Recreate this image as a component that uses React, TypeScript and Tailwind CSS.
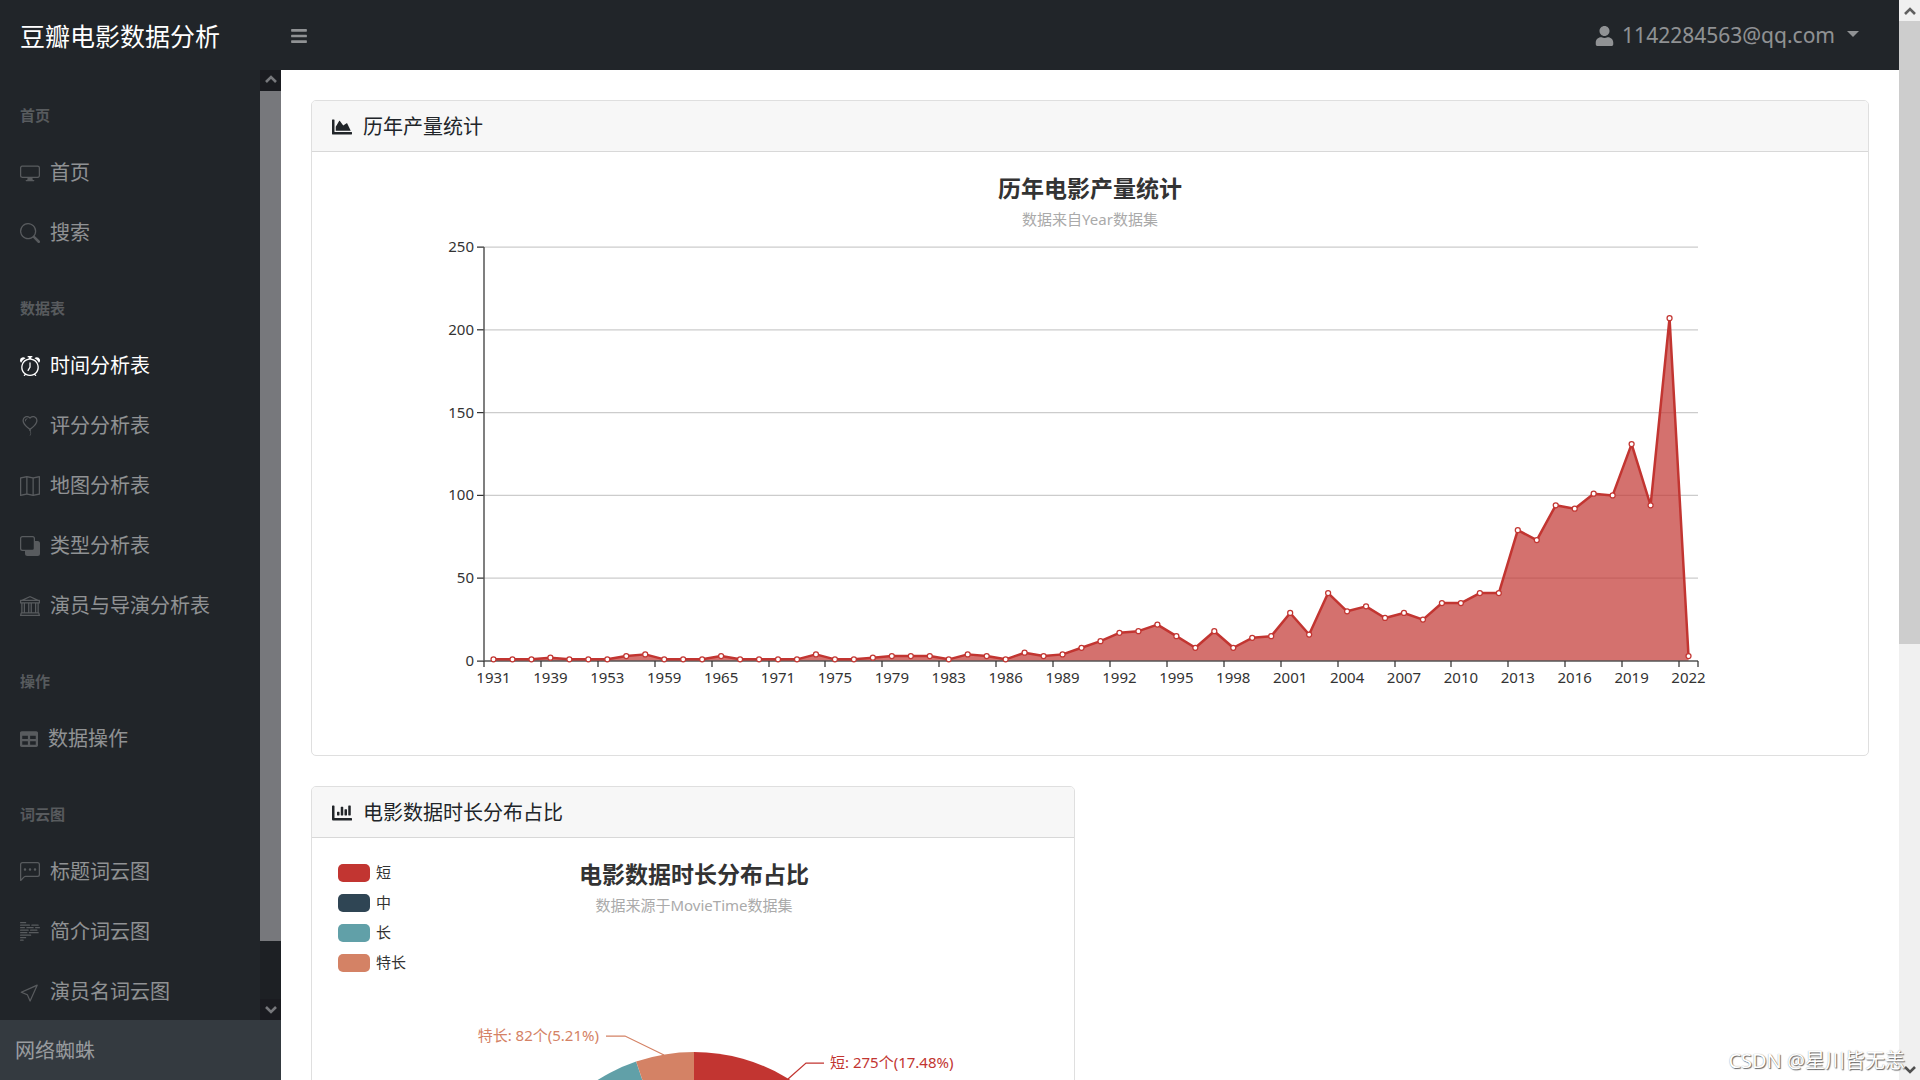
import type { ComponentType, ReactNode } from "react";
import {
  BsAlarm,
  BsBalloonHeart,
  BsBank,
  BsBodyText,
  BsChatLeftDots,
  BsCursor,
  BsDisplay,
  BsMap,
  BsSearch,
  BsSubtract,
} from "react-icons/bs";
import { FaBars, FaChartArea, FaChartBar, FaTable, FaUser } from "react-icons/fa";

type Icon = ComponentType<{ className?: string }>;

interface NavItem {
  label: string;
  icon: Icon;
  active?: boolean;
  narrow?: boolean;
}

const NAV: { heading: string; items: NavItem[] }[] = [
  {
    heading: "首页",
    items: [
      { label: "首页", icon: BsDisplay },
      { label: "搜索", icon: BsSearch },
    ],
  },
  {
    heading: "数据表",
    items: [
      { label: "时间分析表", icon: BsAlarm, active: true },
      { label: "评分分析表", icon: BsBalloonHeart },
      { label: "地图分析表", icon: BsMap },
      { label: "类型分析表", icon: BsSubtract },
      { label: "演员与导演分析表", icon: BsBank },
    ],
  },
  { heading: "操作", items: [{ label: "数据操作", icon: FaTable, narrow: true }] },
  {
    heading: "词云图",
    items: [
      { label: "标题词云图", icon: BsChatLeftDots },
      { label: "简介词云图", icon: BsBodyText },
      { label: "演员名词云图", icon: BsCursor },
    ],
  },
];

const OUTPUT = [
  1, 1, 1, 2, 1, 1, 1, 3, 4, 1, 1, 1, 3, 1, 1, 1, 1, 4, 1, 1, 2, 3, 3, 3, 1, 4, 3, 1, 5, 3, 4, 8, 12,
  17, 18, 22, 15, 8, 18, 8, 14, 15, 29, 16, 41, 30, 33, 26, 29, 25, 35, 35, 41, 41, 79, 73, 94, 92,
  101, 100, 131, 94, 207, 3,
];

const YEARS = [
  1931, 1939, 1953, 1959, 1965, 1971, 1975, 1979, 1983, 1986, 1989, 1992, 1995, 1998, 2001, 2004,
  2007, 2010, 2013, 2016, 2019, 2022,
];

function Chevron({ up = false, className }: { up?: boolean; className: string }) {
  return (
    <svg viewBox="0 0 12 8" className={`h-2 w-3 ${className}`} fill="none" stroke="currentColor" strokeWidth="2.6">
      <path d={up ? "M1 7L6 2L11 7" : "M1 1L6 6L11 1"} />
    </svg>
  );
}

function Sidebar() {
  return (
    <div className="flex w-[281px] shrink-0 flex-col bg-[#212529]">
      <div className="flex min-h-0 flex-1">
        <nav className="min-w-0 flex-1 overflow-hidden">
          {NAV.map((group) => (
            <section key={group.heading}>
              <h2 className="px-5 pt-[34px] pb-[17px] text-[15px] leading-[22px] font-bold text-white/25">
                {group.heading}
              </h2>
              {group.items.map(({ label, icon: ItemIcon, active, narrow }) => (
                <a
                  key={label}
                  href="#"
                  className={`flex h-[60px] items-center gap-2.5 px-5 text-xl whitespace-nowrap ${active ? "text-white" : "text-white/50"}`}
                >
                  <ItemIcon
                    className={`h-5 shrink-0 ${narrow ? "w-[18px]" : "w-5"} ${active ? "text-white" : "text-white/25"}`}
                  />
                  {label}
                </a>
              ))}
            </section>
          ))}
        </nav>
        <div className="flex w-[21px] shrink-0 flex-col bg-[#1d2024]">
          <div className="flex h-[21px] items-center justify-center bg-[#1a1b20] pb-1">
            <Chevron up className="text-[#77787c]" />
          </div>
          <div className="flex-1">
            <div className="h-[93.6%] bg-[#77787c]" />
          </div>
          <div className="flex h-[21px] items-center justify-center bg-[#1a1b20]">
            <Chevron className="text-[#77787c]" />
          </div>
        </div>
      </div>
      <footer className="flex h-[60px] shrink-0 items-center bg-[#343a40] px-[15px] pt-0.5 text-xl text-white/50">
        网络蜘蛛
      </footer>
    </div>
  );
}

function Card({ icon: CardIcon, title, children }: { icon: Icon; title: string; children: ReactNode }) {
  return (
    <section className="overflow-hidden rounded-[5px] border border-[#dfdfdf] bg-white">
      <h2 className="flex h-[51px] items-center gap-[11px] border-b border-[#d8d8d8] bg-[#f7f7f7] px-5 pt-0.5 text-xl text-[#212529]">
        <CardIcon className="h-5 w-5" />
        {title}
      </h2>
      {children}
    </section>
  );
}

const LEFT = 172;
const RIGHT = 1386;
const BASE = 509;
const TOP = 95;
const BAND = (RIGHT - LEFT) / OUTPUT.length;
const px = (i: number) => LEFT + BAND * (i + 0.5);
const py = (v: number) => BASE - (v * (BASE - TOP)) / 250;

function OutputChart() {
  const line = OUTPUT.map((v, i) => `${px(i)},${py(v)}`).join(" ");
  const ticks = YEARS.map((_, i) => Math.round(LEFT + BAND * i * 3)).concat(RIGHT);
  return (
    <svg viewBox="0 0 1556 603" className="block h-auto w-full" fontSize="15" fill="#333">
      <text x="778" y="45" textAnchor="middle" fontSize="23" fontWeight="700">
        历年电影产量统计
      </text>
      <text x="778" y="73" textAnchor="middle" fill="#aaa">
        数据来自Year数据集
      </text>
      {[0, 50, 100, 150, 200, 250].map((v) => (
        <g key={v}>
          {v > 0 && <path d={`M${LEFT} ${py(v)}H${RIGHT}`} stroke="#ccc" strokeWidth="1.25" />}
          <text x="162" y={py(v) + 5} textAnchor="end">
            {v}
          </text>
        </g>
      ))}
      <polygon points={`${px(0)},${BASE} ${line} ${px(63)},${BASE}`} fill="#c23531" fillOpacity="0.7" />
      {[0, 50, 100, 150, 200, 250].map((v) => (
        <path key={v} d={`M165 ${py(v)}H${LEFT}`} stroke="#333" strokeWidth="1.25" />
      ))}
      <path d={`M${LEFT} ${TOP}V${BASE}H${RIGHT}`} fill="none" stroke="#555" strokeWidth="1.5" />
      {ticks.map((x) => (
        <path key={x} d={`M${x} ${BASE}v6`} stroke="#333" strokeWidth="1.25" />
      ))}
      <polyline points={line} fill="none" stroke="#c23531" strokeWidth="2.5" strokeLinejoin="bevel" />
      {OUTPUT.map((v, i) => (
        <circle key={i} cx={px(i)} cy={py(v)} r="2.5" fill="#fff" stroke="#c23531" strokeWidth="1.25" />
      ))}
      {YEARS.map((year, i) => (
        <text key={year} x={px(i * 3)} y="531" textAnchor="middle">
          {year}
        </text>
      ))}
    </svg>
  );
}

const SLICES = [
  { label: "短", color: "#c23531", share: 0.1748 },
  { label: "中", color: "#2f4554", share: 0.5731 },
  { label: "长", color: "#61a0a8", share: 0.2 },
  { label: "特长", color: "#d48265", share: 0.0521 },
];

const CX = 382;
const CY = 394;
const R = 180;

function slicePath(from: number, to: number) {
  const at = (t: number) => `${CX + R * Math.sin(t * 2 * Math.PI)} ${CY - R * Math.cos(t * 2 * Math.PI)}`;
  return `M${CX} ${CY}L${at(from)}A${R} ${R} 0 ${to - from > 0.5 ? 1 : 0} 1 ${at(to)}Z`;
}

function DurationChart() {
  let start = 0;
  return (
    <svg viewBox="0 0 762 603" className="block h-auto w-full" fontSize="15" fill="#333">
      <text x="382" y="45" textAnchor="middle" fontSize="23" fontWeight="700">
        电影数据时长分布占比
      </text>
      <text x="382" y="73" textAnchor="middle" fill="#aaa">
        数据来源于MovieTime数据集
      </text>
      {SLICES.map((s, i) => {
        const from = start;
        start += s.share;
        return (
          <g key={s.label}>
            <rect x="26" y={26 + i * 30} width="32" height="18" rx="5" fill={s.color} />
            <text x="64" y={40 + i * 30}>
              {s.label}
            </text>
            <path d={slicePath(from, start)} fill={s.color} />
          </g>
        );
      })}
      <g fill="none" strokeWidth="1.25">
        <path d="M476 241L494 225H512" stroke="#c23531" />
        <path d="M352 217L313 198H294" stroke="#d48265" />
      </g>
      <text x="518" y="230" fill="#c23531">
        短: 275个(17.48%)
      </text>
      <text x="287" y="203" textAnchor="end" fill="#d48265">
        特长: 82个(5.21%)
      </text>
    </svg>
  );
}

export default function App() {
  return (
    <div className="relative flex h-screen overflow-hidden bg-white font-['Noto_Sans','Noto_Sans_CJK_SC',sans-serif]">
      <div className="flex min-w-0 flex-1 flex-col">
        <header className="flex h-[70px] shrink-0 items-center bg-[#212529] pt-0.5 pr-10">
          <a href="#" className="w-[281px] pl-5 text-[25px] leading-8 text-white">
            豆瓣电影数据分析
          </a>
          <button type="button" aria-label="切换菜单" className="px-2.5 text-white/50">
            <FaBars className="h-[18px] w-4" />
          </button>
          <button type="button" className="ml-auto flex items-center text-[21px] text-white/50">
            <FaUser className="mr-2 h-5 w-[19px]" />
            1142284563@qq.com
            <svg viewBox="0 0 12 6" className="mb-1 ml-3 h-1.5 w-3" fill="currentColor">
              <path d="M0 0H12L6 6Z" />
            </svg>
          </button>
        </header>
        <div className="flex min-h-0 flex-1">
          <Sidebar />
          <main className="min-w-0 flex-1 overflow-hidden p-[30px]">
            <Card icon={FaChartArea} title="历年产量统计">
              <OutputChart />
            </Card>
            <div className="mt-[30px] grid grid-cols-2 gap-[30px]">
              <Card icon={FaChartBar} title="电影数据时长分布占比">
                <DurationChart />
              </Card>
            </div>
          </main>
        </div>
      </div>
      <div className="flex w-[21px] shrink-0 flex-col bg-[#f0f0f0]">
        <div className="flex h-[21px] items-center justify-center">
          <Chevron up className="text-[#606060]" />
        </div>
        <div className="flex-1">
          <div className="h-[60%] bg-[#cdcdcd]" />
        </div>
        <div className="flex h-[21px] items-center justify-center">
          <Chevron className="text-[#505050]" />
        </div>
      </div>
      <p className="absolute right-[15px] bottom-1 text-xl leading-[30px] whitespace-nowrap text-white [text-shadow:1px_1px_1px_#666,0_0_1px_#999]">
        CSDN @星川皆无恙
      </p>
    </div>
  );
}
